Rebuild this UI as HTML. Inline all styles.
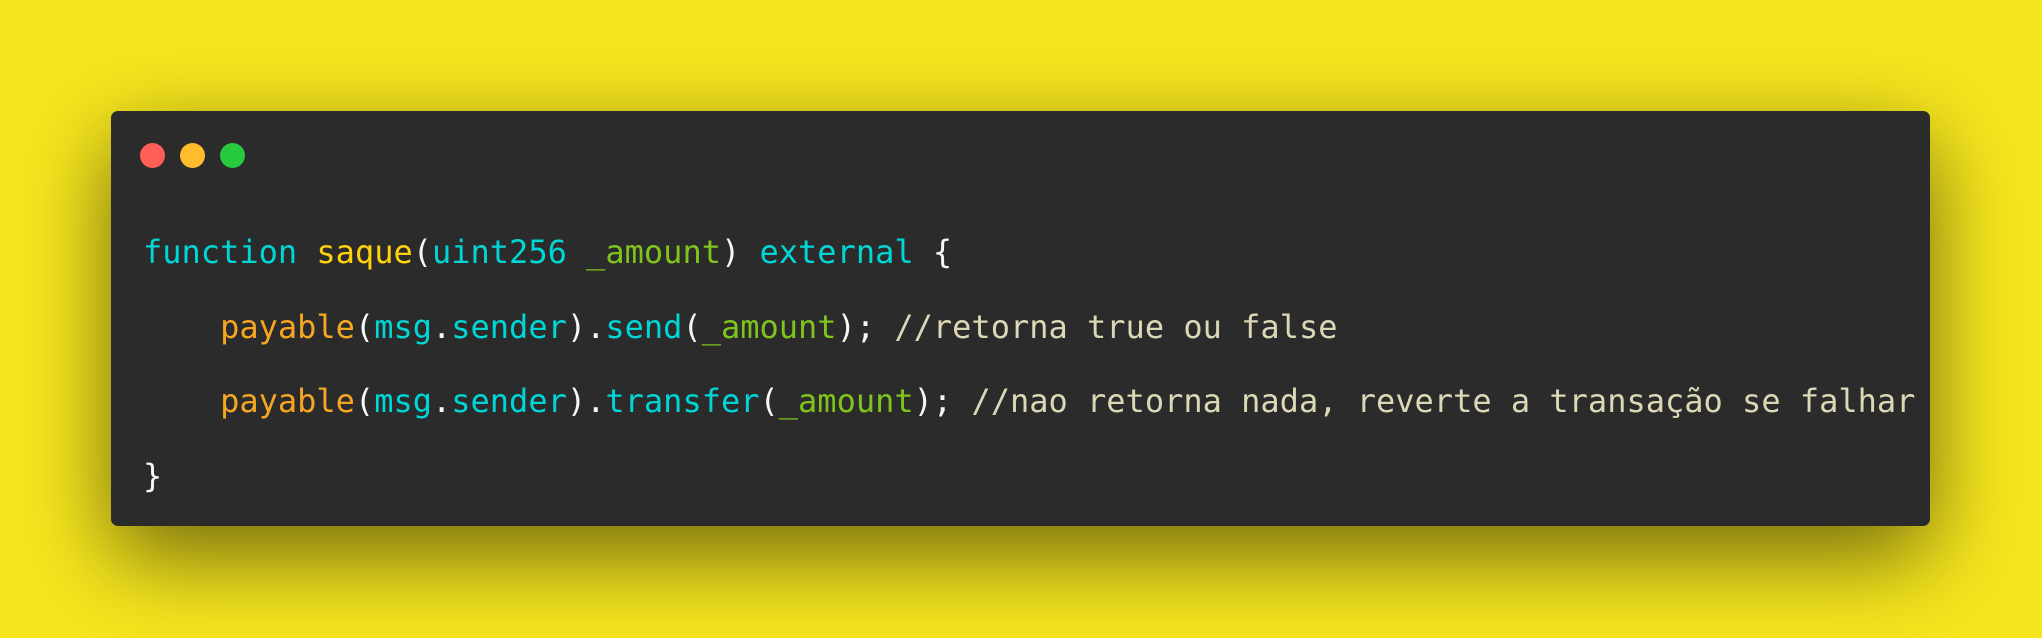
<!DOCTYPE html>
<html><head><meta charset="utf-8"><style>
html,body{margin:0;padding:0;}
body{width:2042px;height:638px;background:#f6e61e;position:relative;overflow:hidden;}
.win{position:absolute;left:111px;top:111px;width:1819px;height:415px;background:#2b2b2b;border-radius:7px;box-shadow:0 30px 90px rgba(0,0,0,0.55);}
.dot{position:absolute;top:143px;width:25px;height:25px;border-radius:50%;}
pre{position:absolute;left:143px;top:215px;margin:0;font-family:"DejaVu Sans Mono","Liberation Mono",monospace;font-size:32px;line-height:74.5px;color:#f8f8f2;}
.k{color:#00d6d6}.f{color:#ffd20a}.o{color:#f5a623}.g{color:#7ec41c}.c{color:#dcd7b5}
</style></head><body>
<div class="win"></div>
<div class="dot" style="left:140px;background:#ff5f56"></div>
<div class="dot" style="left:180px;background:#ffbd2e"></div>
<div class="dot" style="left:220px;background:#27c93f"></div>
<pre><span class="k">function</span> <span class="f">saque</span>(<span class="k">uint256</span> <span class="g">_amount</span>) <span class="k">external</span> {
    <span class="o">payable</span>(<span class="k">msg</span>.<span class="k">sender</span>).<span class="k">send</span>(<span class="g">_amount</span>); <span class="c">//retorna true ou false</span>
    <span class="o">payable</span>(<span class="k">msg</span>.<span class="k">sender</span>).<span class="k">transfer</span>(<span class="g">_amount</span>); <span class="c">//nao retorna nada, reverte a transação se falhar</span>
}</pre>
</body></html>
